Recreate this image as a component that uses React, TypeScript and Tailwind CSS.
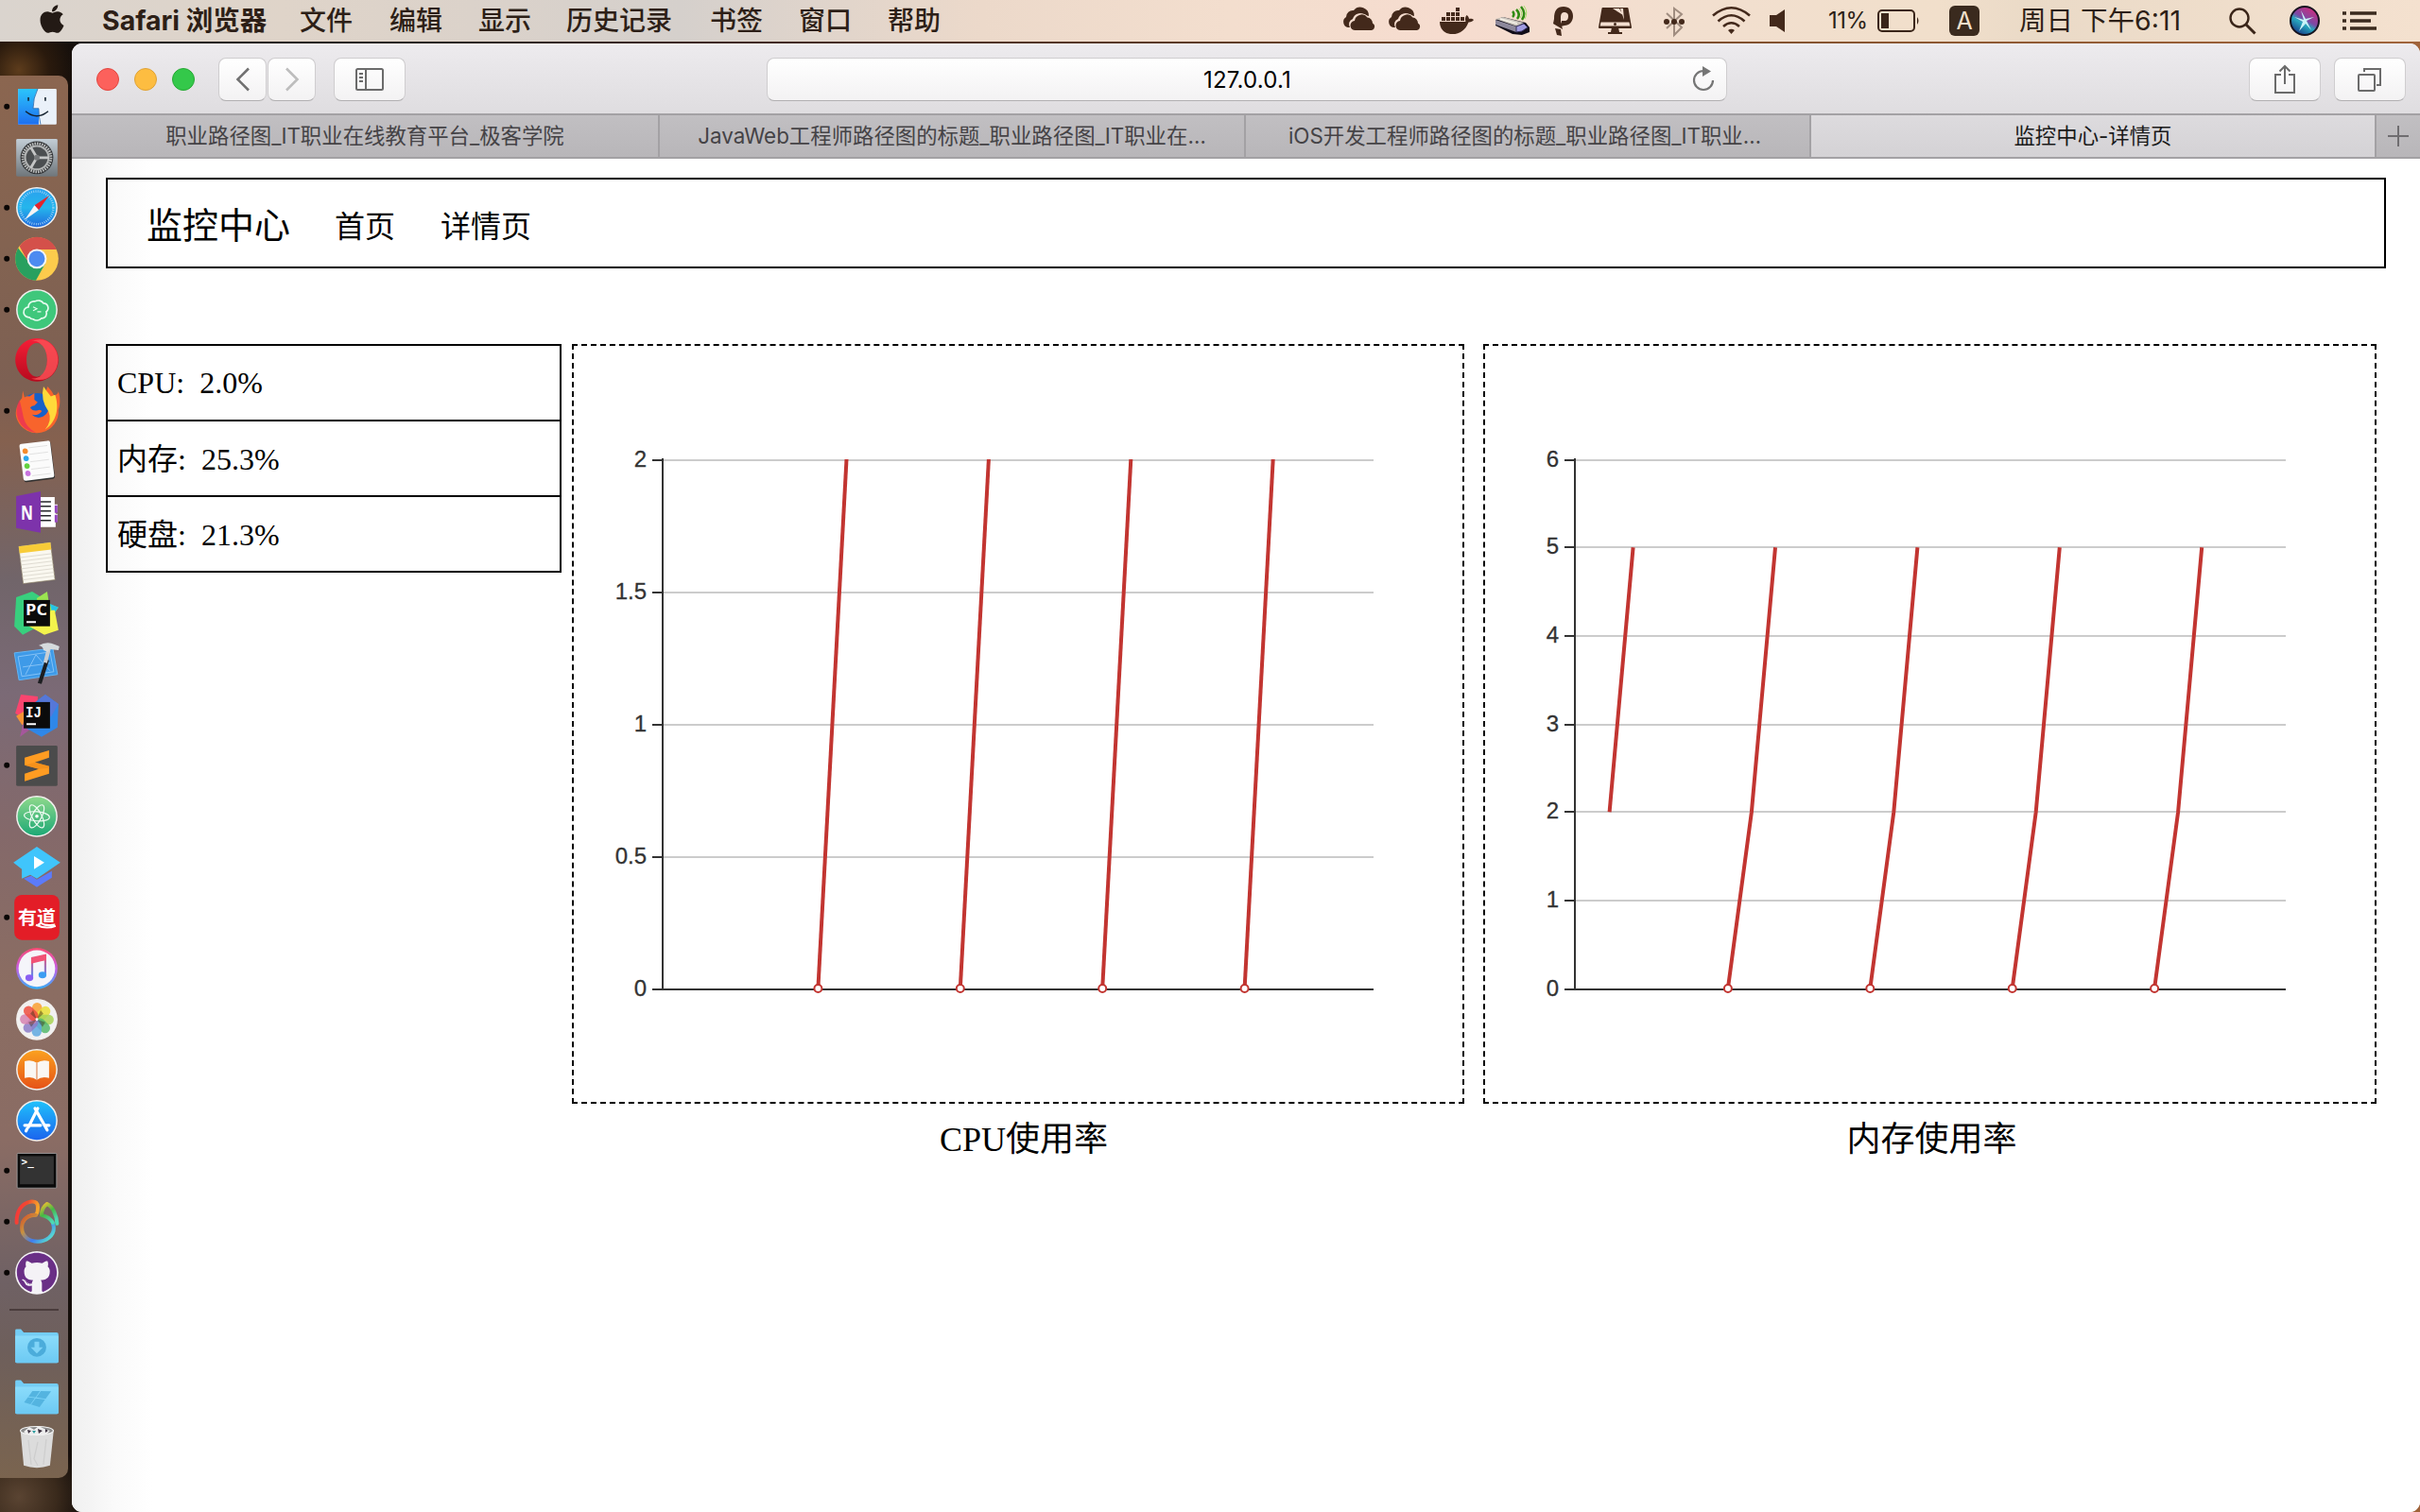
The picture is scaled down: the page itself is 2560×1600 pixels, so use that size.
import type { ReactNode } from "react";
import { FaApple, FaGithub, FaWindows } from "react-icons/fa";

const UI = "font-[Inter,'Noto_Sans_CJK_SC',sans-serif]";
const SERIF = "font-['Liberation_Serif','Noto_Sans_CJK_SC',serif]";

/* ---------- menu bar ---------- */

const menus = [
  { label: "文件", cls: "w-[95px]" },
  { label: "编辑", cls: "w-[94px]" },
  { label: "显示", cls: "w-[93px]" },
  { label: "历史记录", cls: "w-[152px]" },
  { label: "书签", cls: "w-[94px]" },
  { label: "窗口", cls: "w-[94px]" },
  { label: "帮助", cls: "w-[95px]" },
];

function Glyph({ w, cls = "", children }: { w: number; cls?: string; children: ReactNode }) {
  return (
    <svg className={`block shrink-0 ${cls}`} width={w} height={44} viewBox={`0 0 ${w} 44`}>
      {children}
    </svg>
  );
}

function Clouds({ cls }: { cls: string }) {
  return (
    <Glyph w={36} cls={cls}>
      <path
        d="M6 29a6 6 0 0 1-2-11 7 7 0 0 1 8-7 9 9 0 0 1 16 6l-4-1a8 8 0 0 0-13 4 6 6 0 0 0-3 9z"
        fill="#43291b"
      />
      <path
        d="M14 32a5 5 0 0 1-1-10 7.5 7.5 0 0 1 13.500-3.500 6 6 0 0 1 5.500 6 4 4 0 0 1-1 7.500z"
        fill="#43291b"
        stroke="#f5decf"
        strokeWidth="1.600"
        paintOrder="stroke"
      />
    </Glyph>
  );
}

function MenuBar() {
  return (
    <header
      className={`flex h-[44px] w-full items-center bg-[linear-gradient(90deg,#dad4ce_0px,#dfd4c9_300px,#dbd2ca_500px,#d5d0cc_720px,#ecd9ca_1040px,#f3dece_1300px,#f6dccf_1540px,#f2dfcf_1780px,#f1dfcb_2050px,#eadac7_2150px,#f4e1cf_2560px)] text-[28px] leading-[44px] text-[#2d1f17] ${UI}`}
    >
      <FaApple className="ml-[39px] mt-[-5px] h-[34px] w-[32px] shrink-0 text-[#231a15]" />
      <div className="ml-[37px] w-[209px] shrink-0 whitespace-nowrap text-[28.500px] font-bold">
        Safari <span className="text-[28.500px]">浏览器</span>
      </div>
      {menus.map((m) => (
        <div key={m.label} className={`shrink-0 whitespace-nowrap font-medium ${m.cls}`}>
          {m.label}
        </div>
      ))}
      <div className="flex-1" />
      <Clouds cls="mr-[12px]" />
      <Clouds cls="mr-[19px]" />
      <Glyph w={36} cls="mr-[23px]">
        <path d="M0 23h27.500c-1-2.500-.5-5 1-7 1.500 1 2.500 2.500 2.500 4 2-.4 4 0 5 1-1 1.700-3 2.500-5.500 2.400C27.500 31.500 21.500 36 13.500 36 5 36 0 30.500 0 23z" fill="#43291b" />
        <g fill="#43291b">
          <rect x="2" y="18" width="4" height="4" />
          <rect x="7" y="18" width="4" height="4" />
          <rect x="12" y="18" width="4" height="4" />
          <rect x="17" y="18" width="4" height="4" />
          <rect x="22" y="18" width="4" height="4" />
          <rect x="7" y="13" width="4" height="4" />
          <rect x="12" y="13" width="4" height="4" />
          <rect x="17" y="13" width="4" height="4" />
          <rect x="17" y="8" width="4" height="4" />
        </g>
      </Glyph>
      <Glyph w={36} cls="mr-[25px]">
        <path d="M8 18l24 6 4 5v5l-8 3-10-1L0 27v-6z" fill="#100c18" />
        <path d="M0 20l8-2 22 6-7 4z" fill="#c9c3bb" />
        <path d="M0 21l22 7v6L0 26z" fill="#8d889b" />
        <path d="M22 28l8-3 4 4-6 4-6 1z" fill="#a09be0" stroke="#35305c" />
        <path d="M5 20l18 5" stroke="#efebe2" strokeWidth="2" />
        <g fill="none" stroke="#2f8a12" strokeWidth="2.500">
          <path d="M18 12q3 3 0 6M22 10q5 5 1 10M27 7q6 7 1 14" />
        </g>
        <path d="M25 9q5 5 1 10M30 6q5 7 1 14" fill="none" stroke="#a6dd6a" strokeWidth="1" />
      </Glyph>
      <Glyph w={21} cls="mr-[27px]">
        <path d="M1 20C1 11 4 7 11 7c6 0 10 4 10 10s-4 10-9 10l-4 1 1-6h3c3 0 4-2 4-5s-2-4-4-4c-3 0-4 2-4 6v4l2 8-10-6z" fill="#43291b" />
        <path d="M2 30l6 1 1 7-5-1z" fill="#43291b" />
      </Glyph>
      <Glyph w={35} cls="mr-[34px]">
        <path d="M4.500 9h26L34 29H1z" fill="#43291b" stroke="#43291b" strokeWidth="2" strokeLinejoin="round" />
        <path d="M2.500 23.500h30l.8 4H1.700z" fill="#f4dfd0" />
        <circle cx="17.500" cy="25.500" r="1.500" fill="#43291b" />
        <path d="M14 29h7l1 5h3v2H10v-2h3z" fill="#43291b" />
        <path d="M15 9l11 7-4-7zM23 9l4 12-1-12z" fill="#f4dfd0" />
      </Glyph>
      <Glyph w={22} cls="mr-[29px]">
        <path d="M3 14l16 15-8 8V9l8 6L3 30" fill="none" stroke="#a08d80" strokeWidth="2" />
        <g fill="#43291b">
          <circle cx="3" cy="23" r="3" />
          <circle cx="11" cy="23" r="3" />
          <circle cx="19" cy="23" r="3" />
        </g>
      </Glyph>
      <Glyph w={41} cls="mr-[20px]">
        <g fill="none" stroke="#43291b" strokeWidth="2.600">
          <path d="M1 16.500Q20.500 0 40 16.500M6.500 22.500Q20.500 10 34.500 22.500M12 28Q20.500 20.500 29 28" />
        </g>
        <path d="M17 32q3.500-2.500 7 0l-3.500 4z" fill="#43291b" />
      </Glyph>
      <Glyph w={17} cls="mr-[45px]">
        <path d="M0 16h7l9-6v24l-9-6H0z" fill="#43291b" />
      </Glyph>
      <div className="w-[52px] shrink-0 whitespace-nowrap text-[24px] tracking-[-0.500px]">11%</div>
      <Glyph w={45} cls="mr-[31px]">
        <rect x="1" y="11" width="38" height="22" rx="4" fill="none" stroke="#3a2519" strokeWidth="2" />
        <rect x="4" y="14" width="8" height="16" fill="#3a2519" />
        <path d="M42 18q3 4 0 8z" fill="#3a2519" />
      </Glyph>
      <div className="mr-[42px] flex h-8 w-8 shrink-0 items-center justify-center rounded-[6px] bg-[#3a2a1e] text-[25px] leading-8 text-[#f3e0cc]">
        A
      </div>
      <div className="w-[222px] shrink-0 whitespace-nowrap text-[28.500px]">周日 下午6:11</div>
      <Glyph w={29} cls="mr-[35px]">
        <circle cx="11" cy="19" r="9.500" fill="none" stroke="#3a2519" strokeWidth="2.400" />
        <path d="M18 26l9.500 9.500" stroke="#3a2519" strokeWidth="3" />
      </Glyph>
      <Glyph w={32} cls="mr-[24px]">
        <defs>
          <linearGradient id="siri" x1="0.800" y1="0" x2="0.200" y2="1">
            <stop offset="0" stopColor="#d62a7a" />
            <stop offset="0.450" stopColor="#7b4aa5" />
            <stop offset="0.600" stopColor="#27a8bd" />
            <stop offset="1" stopColor="#162a80" />
          </linearGradient>
        </defs>
        <circle cx="16" cy="22" r="15" fill="url(#siri)" stroke="#15131f" strokeWidth="2" />
        <path d="M5 18l10 3-3-10 5 9 9-2-8 4 5 10-6-7-7 8 4-10z" fill="#c9f3f8" />
      </Glyph>
      <Glyph w={36} cls="mr-[46px]">
        <path d="M0 14h4M8 14h28M0 22h4M8 22h22M0 30h4M8 30h28" stroke="#3a2a1e" strokeWidth="3.600" />
      </Glyph>
    </header>
  );
}

/* ---------- dock ---------- */

const disc = (a: string) => <circle cx="39" cy="27" r="21.300" fill={a} stroke="#f2f0ee" strokeWidth="1.500" />;

const dock: { dot: boolean; art: ReactNode }[] = [
  {
    dot: true,
    art: (
      <>
        <rect x="19" y="8" width="41" height="38" rx="1" fill="#eaf1f9" />
        <path d="M19 8h21q-5 10-5 21h6v17H19z" fill="url(#gFinder)" />
        <path d="M40 8q-5 10-5 21h6q0 9 2 17" fill="none" stroke="#2a67a8" strokeWidth="0.800" />
        <path d="M30 17v4M48 17v4" stroke="#14222e" strokeWidth="1.600" />
        <path d="M27 32q12 10 24 0" fill="none" stroke="#14222e" strokeWidth="1.500" />
      </>
    ),
  },
  {
    dot: false,
    art: (
      <>
        <rect x="17" y="7" width="44" height="40" rx="1.500" fill="url(#gSys)" />
        <circle cx="39" cy="27" r="17.500" fill="#2e3032" />
        <circle cx="39" cy="27" r="15" fill="#3a3c3e" stroke="#b9bbbb" strokeWidth="3" strokeDasharray="1.600 1" />
        <circle cx="39" cy="27" r="12.500" fill="#4b4e50" stroke="#b3b5b5" strokeWidth="2" />
        <path d="M39 27h13M39 27l-6.500-11M39 27l-6.500 11" stroke="#c4c5c5" strokeWidth="2.800" />
        <circle cx="39" cy="27" r="3" fill="#77797b" />
      </>
    ),
  },
  {
    dot: true,
    art: (
      <>
        {disc("url(#gSafari)")}
        <circle cx="39" cy="27" r="17.500" fill="none" stroke="#a9d8f7" strokeWidth="2.400" strokeDasharray="0.800 1.500" />
        <path d="M52 14L36.500 24.500l4.500 5z" fill="#e3242b" />
        <path d="M26 40l10.500-15.500 4.500 5z" fill="#f3f4f5" />
      </>
    ),
  },
  {
    dot: true,
    art: (
      <>
        <circle cx="39" cy="27" r="23" fill="#fccb4c" />
        <path d="M19.100 15.500A23 23 0 0 0 38 50L48 32l-9-5-9 3z" fill="#28a05f" />
        <path d="M39 17h20.700q-3-8-11.700-11.500A23 23 0 0 0 20.500 13.500L30 31z" fill="#d4504a" />
        <circle cx="39" cy="27" r="10.500" fill="#f3f5f7" />
        <circle cx="39" cy="27" r="8.500" fill="#4c8bf1" />
      </>
    ),
  },
  {
    dot: true,
    art: (
      <>
        {disc("#3fc77b")}
        <path
          d="M31 35a5.500 5.500 0 0 1-1-11 6 6 0 0 1 7-6 7 7 0 0 1 9 2 5 5 0 0 1 3 9 5 5 0 0 1-5 7 7 7 0 0 1-9 1 5 5 0 0 1-4-2z"
          fill="none"
          stroke="#e6fbef"
          strokeWidth="1.700"
        />
        <path d="M35 24l4 2-4 2M39.500 29h4" fill="none" stroke="#e6fbef" strokeWidth="1.200" />
      </>
    ),
  },
  {
    dot: false,
    art: (
      <>
        <path fillRule="evenodd" d="M39 4a23 23 0 1 0 .1 0zM39 9c7 0 11 8 11 18s-4 18-11 18-11-8-11-18S32 9 39 9z" fill="url(#gOpera)" />
        <path d="M33 7q14-5 22 4a23 23 0 0 1 0 32q-8 8-22 4 5 0 9-2 8-6 8-18T42 9q-4-3-9-2z" fill="#fb5257" fillOpacity="0.800" />
      </>
    ),
  },
  {
    dot: true,
    art: (
      <g transform="translate(4.700 2.800) scale(0.880)">
        <circle cx="39" cy="28" r="22" fill="#1660c9" />
        <path d="M22 3l2 8q3-2 6-1l6-4v8l4 3-4 4q-4 0-5 3 3 4 8 3 5-2 6 1-5 6-12 4 6 6 14 2 8-5 6-14-2-5-4-8 0-8 3-14 5 5 8 11 5-2 5-5c3 8 2 18 0 22A26 26 0 0 1 15 38C11 28 16 18 21 12z" fill="#f8642c" />
        <path d="M47-2q4 6 9 12l5-2c5 14 3 32-12 42q9-11 4-22-10-14-6-30z" fill="#ffd93a" />
        <path d="M18 14q-6 12-2 23 6 15 22 17-12-6-15-18-2-10-5-22z" fill="#e9295a" fillOpacity="0.700" />
      </g>
    ),
  },
  {
    dot: false,
    art: (
      <g transform="rotate(-7 39 27)">
        <rect x="23" y="8" width="33" height="40" rx="2.500" fill="#303030" />
        <rect x="22.500" y="7" width="33" height="39.500" rx="2.500" fill="#fbfbfb" />
        <path d="M32 12h20M32 19h20M32 27h20M32 35h20M32 42h20" stroke="#dcdcdc" strokeWidth="0.800" />
        <circle cx="28" cy="15" r="2.900" fill="#f58b2b" />
        <circle cx="28" cy="23" r="2.900" fill="#2ba6ec" />
        <circle cx="28" cy="31" r="2.900" fill="#63d240" />
        <circle cx="28" cy="39" r="2.900" fill="#c873de" />
      </g>
    ),
  },
  {
    dot: false,
    art: (
      <>
        <path d="M43 11h15v8h3v8h-2v2h2v8h-2v6H43z" fill="#fff" />
        <path d="M58 20h3v8h-3zM58 30h3v8h-3z" fill="#9445bd" />
        <path d="M42 16h12M42 21h12M42 26h12M42 31h12M42 36h12" stroke="#25252a" strokeWidth="1.500" />
        <path d="M17 10l26-5v44l-26-5z" fill="#7d33ab" />
        <text x="22" y="35" className="font-['Open_Sans',sans-serif] text-[21px] font-bold" fill="#fff" textLength="13" lengthAdjust="spacingAndGlyphs">
          N
        </text>
      </>
    ),
  },
  {
    dot: false,
    art: (
      <g transform="rotate(-7 39 27)">
        <rect x="22" y="7" width="34" height="40" fill="#faf8f0" stroke="#8f8467" strokeWidth="0.600" />
        <rect x="22" y="7" width="34" height="7.500" fill="#f8cc38" />
        <path d="M22 19h34M22 23h34M22 27h34M22 31h34M22 35h34M22 39h34M22 43h34" stroke="#d4d0c5" strokeWidth="0.700" />
      </g>
    ),
  },
  {
    dot: false,
    art: (
      <>
        <path d="M17 10l17-6 10 6-5 32-15 8-9-9z" fill="#38cf7e" />
        <path d="M39 11l11-7 2 13 10 4-8 12-13-3z" fill="#9be551" />
        <path d="M53 17l9 4-6 8z" fill="#25c4e8" />
        <path d="M29 40l26-16 3 0 4 21-15 5z" fill="#f3f34c" />
        <rect x="25" y="13" width="28" height="28" fill="#0b0b0b" />
        <text x="27" y="29" className="font-['Open_Sans',sans-serif] text-[16px] font-bold" fill="#fff" textLength="23" lengthAdjust="spacingAndGlyphs">
          PC
        </text>
        <path d="M28 36.500h10" stroke="#fff" strokeWidth="2" />
      </>
    ),
  },
  {
    dot: false,
    art: (
      <>
        <path d="M15 15l41-5 5 28-41 6z" fill="#3e9ae8" stroke="#63b4f3" />
        <path d="M19 19l34-5 4 21-34 5zM27 38l11-21 15 17M24 30l29-4" fill="none" stroke="#8cc6f7" strokeWidth="0.900" />
        <path d="M48 22l4 1-8 25-4-1z" fill="#1c1d20" />
        <path d="M50 9l4 1-4 16-4-1z" fill="#c9ced3" />
        <path d="M41 7q9-5 17-1l5 2-1 4-9-1-2 3-5-2q0-4-5-5z" fill="#d5dadd" />
      </>
    ),
  },
  {
    dot: false,
    art: (
      <>
        <path d="M22 5l18 2-2 32-22-14z" fill="#f9456f" />
        <path d="M17 28l10-6 4 18-8-3z" fill="#f59335" />
        <path d="M25 34l14 3-18 13z" fill="#a6579c" />
        <path d="M36 14l12-9 14 10-1 25-17 10-16-9z" fill="#2f87e8" />
        <path d="M40 11l8-6 14 10-8 14z" fill="#5677d8" />
        <rect x="25" y="13" width="28" height="28" fill="#0b0b0b" />
        <text x="27" y="29" className="font-['Liberation_Mono',monospace] text-[17px] font-bold" fill="#fff" textLength="17" lengthAdjust="spacingAndGlyphs">
          IJ
        </text>
        <path d="M28 36.500h10" stroke="#fff" strokeWidth="2" />
      </>
    ),
  },
  {
    dot: true,
    art: (
      <>
        <rect x="17" y="6" width="44" height="43" rx="1.500" fill="#4b4b4b" />
        <path d="M26 19l26-8v8l-15 5 15 4v8l-26 8v-8l15-5-15-4z" fill="#ff9c22" />
        <path d="M37 24l15 4v2l-11 1-15-4z" fill="#ef8a17" fillOpacity="0.600" />
      </>
    ),
  },
  {
    dot: false,
    art: (
      <>
        {disc("url(#gAtom)")}
        <g fill="none" stroke="#eefaf2" strokeWidth="1.200">
          <ellipse cx="39" cy="27" rx="13.500" ry="5" transform="rotate(5 39 27)" />
          <ellipse cx="39" cy="27" rx="13.500" ry="5" transform="rotate(62 39 27)" />
          <ellipse cx="39" cy="27" rx="13.500" ry="5" transform="rotate(118 39 27)" />
        </g>
        <circle cx="39" cy="27" r="1.800" fill="#fff" />
      </>
    ),
  },
  {
    dot: false,
    art: (
      <>
        <path d="M25 39l14 9 16-10v-7l-16 9-6-4z" fill="#5c7bfa" />
        <path d="M14 22L39 5l25 17-25 17-7-4-9 4v-10z" fill="#40c5fc" />
        <path d="M36 15l11 7-11 7z" fill="#fff" />
      </>
    ),
  },
  {
    dot: true,
    art: (
      <>
        <rect x="15" y="3" width="48" height="48" rx="8" fill="#e31d27" />
        <text x="19" y="34" className="font-['Noto_Sans_CJK_SC',sans-serif] text-[20px] font-bold" fill="#fff">
          有道
        </text>
        <path d="M38 35q11 5 21 1" fill="none" stroke="#fff" strokeWidth="2" />
      </>
    ),
  },
  {
    dot: false,
    art: (
      <>
        <circle cx="39" cy="27" r="22" fill="url(#gTunes)" />
        <circle cx="39" cy="27" r="19.500" fill="#f5f5fa" />
        <path d="M34 36V16l14-3v20" fill="none" stroke="url(#gNote)" strokeWidth="2.200" />
        <path d="M33 16l16-4v6l-16 4z" fill="#f25275" />
        <ellipse cx="31" cy="37" rx="4.200" ry="3.500" fill="#8a5ff2" />
        <ellipse cx="45" cy="34" rx="4.200" ry="3.500" fill="#3c9df2" />
      </>
    ),
  },
  {
    dot: false,
    art: (
      <>
        {disc("#f1f1f1")}
        <g fillOpacity="0.850">
          <rect x="34" y="9" width="10.500" height="18" rx="5.200" fill="#f9a030" />
          <rect x="34" y="9" width="10.500" height="18" rx="5.200" fill="#e9df35" transform="rotate(45 39 27)" />
          <rect x="34" y="9" width="10.500" height="18" rx="5.200" fill="#a8d354" transform="rotate(90 39 27)" />
          <rect x="34" y="9" width="10.500" height="18" rx="5.200" fill="#55b96c" transform="rotate(135 39 27)" />
          <rect x="34" y="9" width="10.500" height="18" rx="5.200" fill="#5fa9e0" transform="rotate(180 39 27)" />
          <rect x="34" y="9" width="10.500" height="18" rx="5.200" fill="#8c7cc8" transform="rotate(225 39 27)" />
          <rect x="34" y="9" width="10.500" height="18" rx="5.200" fill="#d682b0" transform="rotate(270 39 27)" />
          <rect x="34" y="9" width="10.500" height="18" rx="5.200" fill="#ee4d3f" transform="rotate(315 39 27)" />
        </g>
        <path d="M39 27l-7-6 3-4zM39 27l4-10 3 4zM39 27l9 3-3 5zM39 27l-6 8-3-5z" fill="#3a3020" fillOpacity="0.450" />
        <circle cx="39" cy="27" r="1.500" fill="#fff" />
      </>
    ),
  },
  {
    dot: false,
    art: (
      <>
        {disc("url(#gBooks)")}
        <path d="M39 20q-5-4-13-2v18q8-2 13 2 5-4 13-2V18q-8-2-13 2z" fill="#faf7f3" />
        <path d="M39 20v18" stroke="#d9743a" strokeWidth="1" />
      </>
    ),
  },
  {
    dot: false,
    art: (
      <>
        {disc("url(#gStore)")}
        <path d="M40 14L30 34M37 14l13 23M26 32h17M47 32h5M28.500 36l-1 2" fill="none" stroke="#fff" strokeWidth="3.200" strokeLinecap="round" />
      </>
    ),
  },
  {
    dot: true,
    art: (
      <>
        <rect x="18" y="8.500" width="42" height="37" rx="1" fill="#0a0a0a" stroke="#a8a8a8" strokeWidth="0.800" />
        <rect x="21" y="11.500" width="36" height="30" fill="#333" />
        <text x="22.500" y="21.500" className="font-['DejaVu_Sans_Mono',monospace] text-[11px] font-bold" fill="#fff">
          {">_"}
        </text>
      </>
    ),
  },
  {
    dot: true,
    art: (
      <g fill="none" strokeWidth="4" strokeLinecap="round" strokeLinejoin="round">
        <path d="M17.500 28C17 16 23 7 33 5.500c5-.5 7 2 7 6 0 3 0 6-2 8-6 0-11 2-14 8" stroke="url(#gNavA)" />
        <path d="M38 20c-9 0-15 5-15 13 0 10 8 15 17 15s17-6 17-14c0-2-.5-4-1-5" stroke="url(#gNavB)" />
        <path d="M60.500 29C60 20 56 11 50 8c-4 3-6 8-6 12 5 1 9 3 12 8" stroke="url(#gNavC)" />
      </g>
    ),
  },
  {
    dot: true,
    art: (
      <>
        <circle cx="39" cy="27" r="23" fill="#f4f2f6" />
        <FaGithub x="17" y="5" size={44} color="#6a2f86" />
      </>
    ),
  },
];

function DockDefs() {
  const g = (id: string, stops: string[], x2 = 0, y2 = 1) => (
    <linearGradient id={id} x1="0" y1="0" x2={x2} y2={y2}>
      {stops.map((s, i) => (
        <stop key={i} offset={i / (stops.length - 1)} stopColor={s} />
      ))}
    </linearGradient>
  );
  return (
    <svg className="absolute h-0 w-0">
      <defs>
        {g("gFinder", ["#2bc5fb", "#1e6ff0"])}
        {g("gSys", ["#c3ced6", "#6f767b"])}
        {g("gSafari", ["#2aa0ee", "#25b6ec", "#1f66dd"])}
        {g("gOpera", ["#f51f37", "#b80a1e"])}
        {g("gAtom", ["#8fd98c", "#1ba875"])}
        {g("gTunes", ["#fb4a72", "#c55fe6", "#35aef6"])}
        {g("gNote", ["#f25275", "#5a8cf2"])}
        {g("gBooks", ["#fba21f", "#e55118"])}
        {g("gStore", ["#1fc2fb", "#1b63ee"])}
        {g("gNavA", ["#f8343c", "#f04a30", "#f6a52b"], 1, 0.300)}
        {g("gNavB", ["#d2552a", "#c9923f", "#3f7df0", "#59e0cf"], 1, 0.800)}
        {g("gNavC", ["#f7c12e", "#45b845", "#4ed8b5"], 0.500, 1)}
        {g("gFolder", ["#8bdcfb", "#6cc9f3"])}
      </defs>
    </svg>
  );
}

function Slot({ dot = false, children }: { dot?: boolean; children: ReactNode }) {
  return (
    <svg className="block h-[53.650px] w-[72px] shrink-0 overflow-visible" viewBox="0 0 72 54">
      {dot && <circle cx="7" cy="27" r="3" fill="#0a0605" />}
      {children}
    </svg>
  );
}

function Folder({ children }: { children: ReactNode }) {
  return (
    <Slot>
      <path d="M16 10q0-1.500 1.500-1.500H22l3 3.500h35q2 0 2 2v29q0 1.500-1.500 1.500h-43Q16 44.500 16 43z" fill="#74cdf5" />
      <path d="M16 15.500h46V43q0 1.500-1.500 1.500h-43Q16 44.500 16 43z" fill="url(#gFolder)" />
      {children}
    </Slot>
  );
}

function Dock() {
  return (
    <nav className="mt-9 flex h-[1484px] w-[72px] shrink-0 flex-col rounded-r-[10px] bg-[linear-gradient(180deg,#8b6650_0%,#836351_12%,#7d6053_22%,#85614f_26%,#71656a_36%,#7b6a76_44%,#84696a_54%,#8b6d62_65%,#8a6c64_76%,#6f6164_86%,#6e5f5b_91%,#7a644f_100%)] pt-[6px]">
      <DockDefs />
      {dock.map((d, i) => (
        <Slot key={i} dot={d.dot}>
          {d.art}
        </Slot>
      ))}
      <div className="ml-[10px] mt-[12px] h-[2px] w-[52px] shrink-0 bg-[#4a3c3c]" />
      <div className="h-[11px] shrink-0" />
      <Folder>
        <circle cx="39" cy="28" r="10" fill="#4bacdb" />
        <path d="M36.500 22h5v6h4L39 34.500 32.500 28h4z" fill="#7fd3f7" />
      </Folder>
      <Folder>
        <g transform="rotate(8 39 28) translate(15 0) skewX(-28)">
          <FaWindows x="28" y="17" size={21} color="#54b4e0" />
        </g>
      </Folder>
      <Slot>
        <path d="M21.500 7q17.500-6 35.500 0l-4 38q-14 5-28 0z" fill="#dcdcdc" />
        <ellipse cx="39" cy="8" rx="17.500" ry="4.500" fill="#8b8b8b" stroke="#f5f5f5" strokeWidth="1.200" />
        <path d="M25 9l6-5 5 3 5-4 6 3 6 2-4 4H28z" fill="#eee" />
        <path d="M29 7l4 1-3 3zM40 6l5 2-4 3zM48 6l3 2-3 2z" fill="#3b3140" />
        <path d="M34 8l4 0-2 3z" fill="#2f9ca0" />
        <path d="M30 18l3 26M40 20l-4 18 4 7M49 17l-3 27" stroke="#cecece" strokeWidth="1.300" fill="none" />
      </Slot>
    </nav>
  );
}

/* ---------- browser chrome ---------- */

const btn =
  "flex h-[46px] shrink-0 items-center justify-center rounded-[8px] border border-[#cfcdcf] border-b-[#b1afb1] bg-gradient-to-b from-white to-[#f3f2f3]";

function Toolbar() {
  return (
    <div className="flex h-[74px] shrink-0 items-center bg-gradient-to-b from-[#edebee] to-[#dfdde0] pl-[26px] pr-[15px] pt-[2px]">
      <i className="mr-4 block h-6 w-6 rounded-full border border-[#e2463f] bg-[#fc615c]" />
      <i className="mr-4 block h-6 w-6 rounded-full border border-[#dfa236] bg-[#fdbd41]" />
      <i className="mr-[25px] block h-6 w-6 rounded-full border border-[#27a934] bg-[#34c84a]" />
      <div className={`mr-px w-[51px] ${btn}`}>
        <svg width="16" height="26" viewBox="0 0 16 26" fill="none" stroke="#707070" strokeWidth="2.600">
          <path d="M14 1.500L2.500 13 14 24.500" />
        </svg>
      </div>
      <div className={`mr-[19px] w-[51px] ${btn}`}>
        <svg width="16" height="26" viewBox="0 0 16 26" fill="none" stroke="#bdbdbd" strokeWidth="2.600">
          <path d="M2 1.500L13.500 13 2 24.500" />
        </svg>
      </div>
      <div className={`w-[76px] ${btn}`}>
        <svg width="30" height="24" viewBox="0 0 30 24" fill="none" stroke="#6b6b6b" strokeWidth="2">
          <rect x="1" y="1" width="28" height="22" rx="1.500" />
          <path d="M11 1v22" />
          <path d="M4 6h4M4 10h4M4 14h4" strokeWidth="1.800" />
        </svg>
      </div>
      <div className={`ml-[382px] w-[1016px] ${btn}`}>
        <div className="w-[37px]" />
        <span className={`flex-1 pt-[2px] text-center text-[24px] tracking-[0.200px] text-black ${UI}`}>127.0.0.1</span>
        <svg className="mr-[12px]" width="24" height="28" viewBox="0 0 24 28" fill="none">
          <path d="M12 5a10 10 0 1 0 10 10" stroke="#757575" strokeWidth="2.200" />
          <path d="M11 0l9 5.500-9 5.500z" fill="#757575" />
        </svg>
      </div>
      <div className="flex-1" />
      <div className={`mr-[14px] w-[76px] ${btn}`}>
        <svg width="24" height="32" viewBox="0 0 24 32" fill="none" stroke="#6b6b6b" strokeWidth="2">
          <path d="M8 11H2v19h20V11h-6M12 21V2M6.500 7.500L12 2l5.500 5.500" />
        </svg>
      </div>
      <div className={`w-[76px] ${btn}`}>
        <svg width="26" height="26" viewBox="0 0 26 26" fill="none" stroke="#6b6b6b" strokeWidth="2">
          <rect x="1" y="8" width="17" height="17" rx="1" />
          <path d="M7 5V2h17v17h-4" />
        </svg>
      </div>
    </div>
  );
}

function Tab({ cls, children }: { cls: string; children: ReactNode }) {
  return (
    <div className={`flex shrink-0 items-center justify-center whitespace-nowrap border-r-2 border-[#a3a1a4] ${cls}`}>
      {children}
    </div>
  );
}

function Tabs() {
  const idle = "bg-gradient-to-b from-[#c1bfc2] to-[#b8b6b9] text-[#454346]";
  return (
    <div className={`flex h-[48px] shrink-0 border-y-2 border-[#a3a1a4] text-[22.400px] leading-[44px] ${UI}`}>
      <Tab cls={`w-[622px] ${idle}`}>职业路径图_IT职业在线教育平台_极客学院</Tab>
      <Tab cls={`w-[620px] ${idle}`}>JavaWeb工程师路径图的标题_职业路径图_IT职业在…</Tab>
      <Tab cls={`w-[598px] pr-[6px] ${idle}`}>iOS开发工程师路径图的标题_职业路径图_IT职业…</Tab>
      <Tab cls="w-[598px] bg-gradient-to-b from-[#dddbde] to-[#d4d2d5] text-[#1a1a1a]">监控中心-详情页</Tab>
      <div className={`flex flex-1 items-center justify-center ${idle}`}>
        <svg width="22" height="22" viewBox="0 0 22 22" stroke="#6f6d70" strokeWidth="2">
          <path d="M11 0v22M0 11h22" />
        </svg>
      </div>
    </div>
  );
}

/* ---------- page ---------- */

type ChartProps = {
  ticks: string[];
  axisX: number;
  lines: string[];
  zeros: number[];
};

const PLOT_TOP = 120;
const PLOT_H = 560;

function Chart({ ticks, axisX, lines, zeros }: ChartProps) {
  const n = ticks.length - 1;
  return (
    <svg className="block" width="940" height="800" viewBox="0 0 940 800">
      {ticks.map((t, i) => {
        const y = 2 * Math.floor((PLOT_TOP + (PLOT_H * i) / n) / 2) + 1;
        return (
          <g key={t}>
            {i < n && <path d={`M${axisX} ${y}H${axisX + 752}`} stroke="#ccc" strokeWidth="2" />}
            <path d={`M${axisX - 11} ${y}H${axisX}`} stroke="#333" strokeWidth="2" />
            <text
              x={axisX - 17}
              y={y + 7}
              textAnchor="end"
              fill="#333"
              stroke="#333"
              strokeWidth="0.300"
              className="font-['Liberation_Sans',sans-serif] text-[24px]"
            >
              {t}
            </text>
          </g>
        );
      })}
      <path d={`M${axisX} 119V682`} stroke="#333" strokeWidth="2" />
      <path d={`M${axisX} 681H${axisX + 752}`} stroke="#333" strokeWidth="2" />
      {lines.map((p) => (
        <polyline key={p} points={p} fill="none" stroke="#c23531" strokeWidth="4" strokeLinejoin="bevel" />
      ))}
      {zeros.map((x) => (
        <circle key={x} cx={x} cy="680" r="4" fill="#fff" stroke="#c23531" strokeWidth="2" />
      ))}
    </svg>
  );
}

const cpuZeros = [258.4, 408.8, 559.2, 709.6];
const cpuLines = cpuZeros.map((x) => `${x},680 ${x + 30.1},120`);
const memZeros = [256.9, 407.3, 557.7, 708.1];
const memLines = ["131.6,493.3 156.6,213.3", ...memZeros.map((x) => `${x},680 ${x + 25},493.3 ${x + 50.1},213.3`)];

function Panel({ title, cls, cap, children }: { title: string; cls: string; cap: string; children: ReactNode }) {
  return (
    <figure className={`flex shrink-0 flex-col ${cls}`}>
      <div className="h-[804px] border-2 border-dashed border-black">{children}</div>
      <figcaption className={`mt-[12px] text-center text-[36px] leading-[52px] ${cap}`}>{title}</figcaption>
    </figure>
  );
}

function Page() {
  return (
    <main
      className={`flex-1 bg-[linear-gradient(90deg,#f0f0f0_0px,#f4f4f4_20px,#fafafa_45px,#fff_85px)] pl-[36px] pt-[20px] text-black ${SERIF}`}
    >
      <div className="flex h-[96px] w-[2412px] items-center border-2 border-black pl-[41px] pt-[6px]">
        <h1 className="w-[199px] text-[38px] leading-[54px]">监控中心</h1>
        <a className="w-[112px] pt-[2px] text-[32px]">首页</a>
        <a className="pt-[2px] text-[32px]">详情页</a>
      </div>
      <div className="mt-[80px] flex items-start">
        <ul className="w-[482px] shrink-0 border-2 border-black text-[32px]">
          <li className="flex h-[80px] items-center whitespace-pre border-b-2 border-black pb-px pl-[10px]">CPU:  2.0%</li>
          <li className="flex h-[80px] items-center whitespace-pre border-b-2 border-black pl-[10px] pt-[2px]">内存:  25.3%</li>
          <li className="flex h-[78px] items-center whitespace-pre pl-[10px] pt-[2px]">硬盘:  21.3%</li>
        </ul>
        <Panel title="CPU使用率" cls="ml-[11px] w-[944px]" cap="pl-[12px]">
          <Chart ticks={["2", "1.5", "1", "0.5", "0"]} axisX={94} lines={cpuLines} zeros={cpuZeros} />
        </Panel>
        <Panel title="内存使用率" cls="ml-[20px] w-[945px]" cap="pl-[4px]">
          <Chart ticks={["6", "5", "4", "3", "2", "1", "0"]} axisX={95} lines={memLines} zeros={memZeros} />
        </Panel>
      </div>
    </main>
  );
}

export default function App() {
  return (
    <div className="flex h-[1600px] w-[2560px] flex-col overflow-hidden bg-[linear-gradient(90deg,#1a120d_0px,#100b09_140px,#3a2517_700px,#6b4328_1500px,#8a5630_2000px,#a0633a_2560px)]">
      <MenuBar />
      <div className="flex min-h-0 flex-1 bg-[radial-gradient(circle_at_20px_30px,#5d3c1c_0px,#2a1a0d_32px,transparent_60px),radial-gradient(circle_at_20px_1540px,#5a4432_0px,#3a2a1c_40px,transparent_70px)]">
        <Dock />
        <div className="ml-1 mt-[2px] flex flex-1 flex-col overflow-hidden rounded-[11px] bg-white">
          <Toolbar />
          <Tabs />
          <Page />
        </div>
      </div>
    </div>
  );
}
